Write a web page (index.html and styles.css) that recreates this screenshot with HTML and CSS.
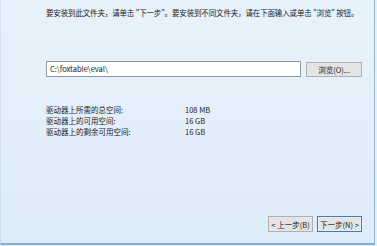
FILE: index.html
```html
<!DOCTYPE html>
<html lang="zh-CN">
<head>
  <meta charset="UTF-8">
  <title>选择安装文件夹</title>
  <link rel="stylesheet" href="styles.css">
</head>
<body>
  <div class="panel">
    <p class="intro">要安装到此文件夹，请单击 "下一步"。要安装到不同文件夹，请在下面输入或单击 "浏览" 按钮。</p>
    <div class="path-row">
      <div class="path-input">C:\foxtable\eval\</div>
      <button class="btn">浏览(O)...</button>
    </div>
    <div class="space">
      <span>驱动器上所需的总空间:</span><span>108 MB</span>
      <span>驱动器上的可用空间:</span><span>16 GB</span>
      <span>驱动器上的剩余可用空间:</span><span>16 GB</span>
    </div>
    <div class="nav">
      <button class="btn">&lt; 上一步(B)</button>
      <button class="btn focus">下一步(N) &gt;</button>
    </div>
  </div>
</body>
</html>
```

FILE: styles.css
```css
html, body {
  margin: 0;
  padding: 0;
  width: 377px;
  height: 246px;
  overflow: hidden;
  background: #e6f0fa;
}
body {
  font-family: "Noto Sans CJK SC", "DejaVu Sans", sans-serif;
  font-size: 7.5px;
  color: #1a1a1a;
}
.panel {
  box-sizing: border-box;
  width: 375px;
  height: 245px;
  padding: 8px 12px 11px 45px;
  display: flex;
  flex-direction: column;
  background: linear-gradient(180deg, #e8f2fc 0%, #dfecf9 100%);
  border-right: 1px solid #8fbbe3;
  border-bottom: 2px solid #7fb1e0;
  border-left: 1px dotted #b8d2ea;
}
.intro {
  margin: 0;
  line-height: 10px;
  white-space: nowrap;
  letter-spacing: -0.15px;
}
.path-row {
  margin-top: 43px;
  display: flex;
  align-items: center;
  gap: 5px;
}
.path-input {
  box-sizing: border-box;
  width: 256px;
  height: 16px;
  padding: 0 3px;
  line-height: 14px;
  background: #fff;
  border: 1px solid #8f9aa5;
}
.btn {
  box-sizing: border-box;
  width: 56px;
  height: 15px;
  padding: 0;
  font: inherit;
  color: #1a1a1a;
  background: #e4e4e4;
  border: 1px solid #b0b0b0;
}
.space {
  margin-top: 27px;
  display: grid;
  grid-template-columns: 139px auto;
  line-height: 11px;
}
.nav {
  margin-top: auto;
  display: flex;
  justify-content: flex-end;
  gap: 4px;
}
.nav .btn {
  width: 45px;
  height: 16px;
}
.nav .focus {
  border-color: #3d7fb5;
  box-shadow: inset 0 0 0 1px #e8f0f8;
}
```
